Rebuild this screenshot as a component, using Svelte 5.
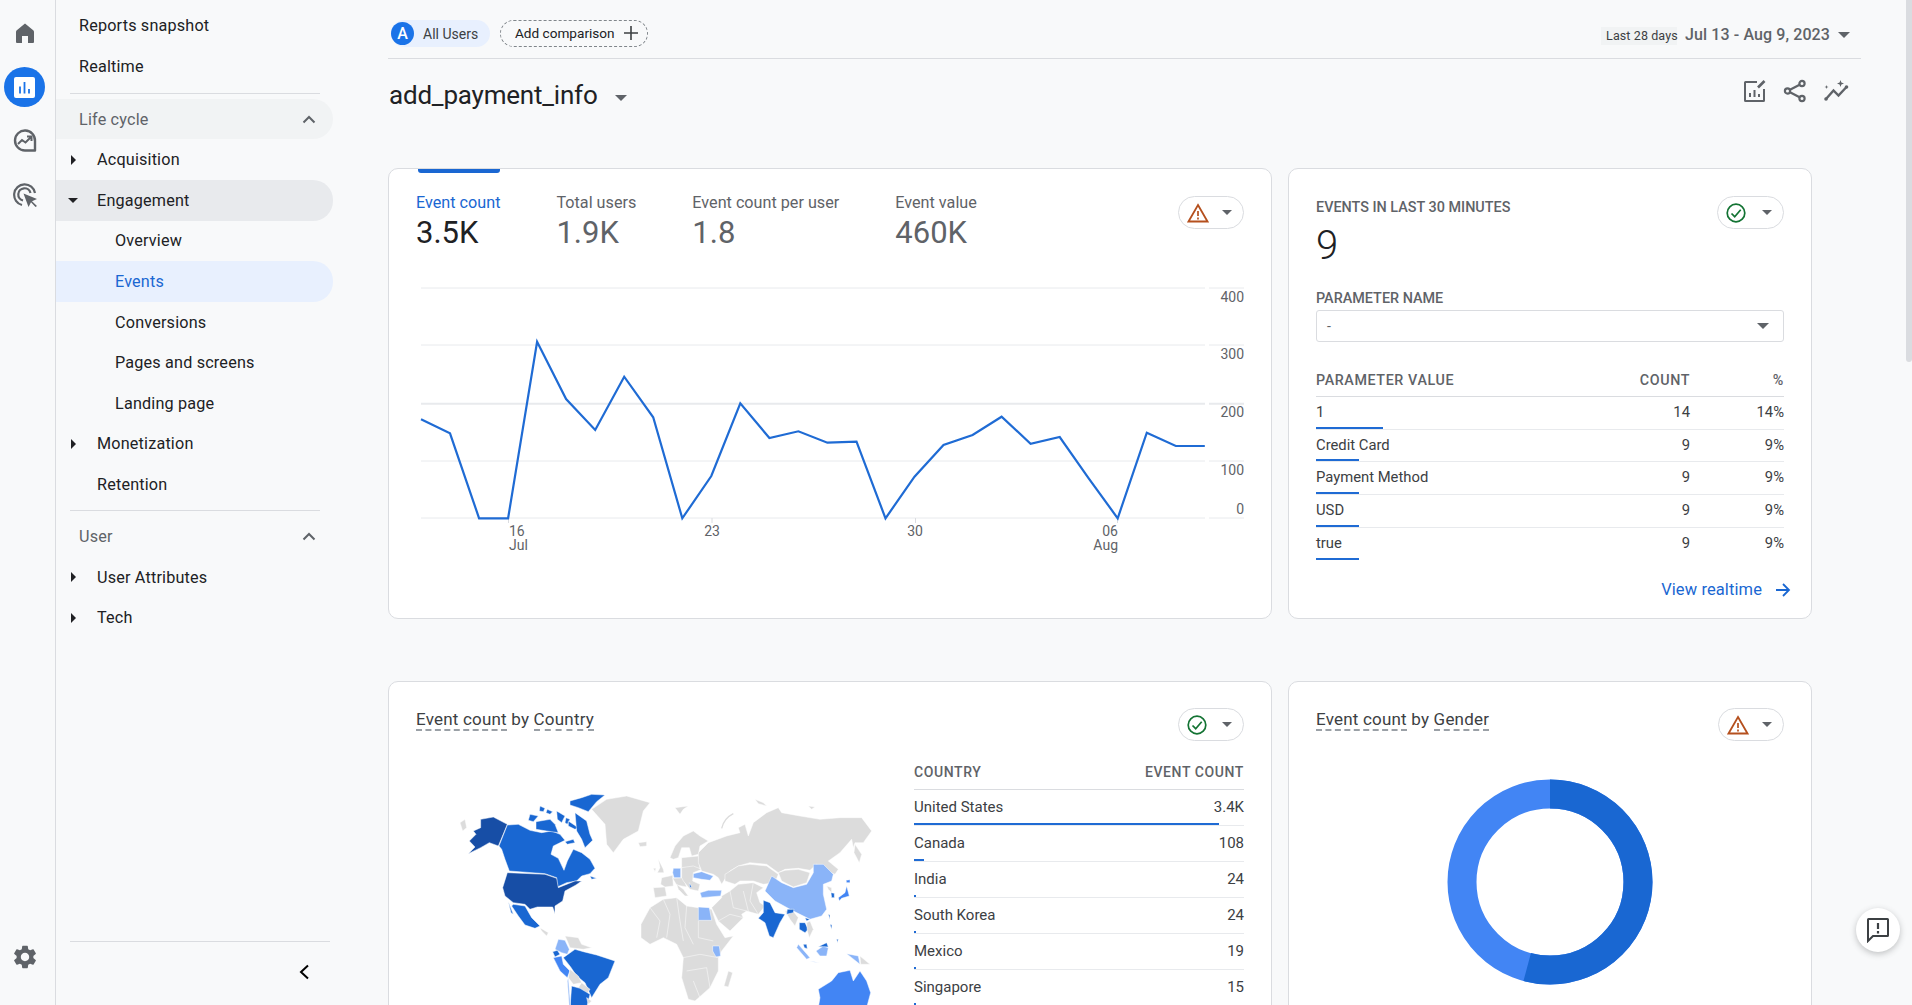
<script>
  const rows = [
    { t: 'Reports snapshot', k: 'top' },
    { t: 'Realtime', k: 'top' }
  ];
  const life = [
    { t: 'Acquisition', a: 'r' },
    { t: 'Engagement', a: 'd', cls: 'eng' },
    { t: 'Overview', sub: true },
    { t: 'Events', sub: true, cls: 'act' },
    { t: 'Conversions', sub: true },
    { t: 'Pages and screens', sub: true },
    { t: 'Landing page', sub: true },
    { t: 'Monetization', a: 'r' },
    { t: 'Retention' }
  ];
  const user = [
    { t: 'User Attributes', a: 'r' },
    { t: 'Tech', a: 'r' }
  ];
  const tabs = [
    { l: 'Event count', v: '3.5K', on: true },
    { l: 'Total users', v: '1.9K' },
    { l: 'Event count per user', v: '1.8' },
    { l: 'Event value', v: '460K' }
  ];
  const zy = [778,820,1075,1075,545,717,810,650,772,1075,948,730,834,814,848,845,1075,950,855,825,770,851,831,955,1075,818,858,858];
  const line = zy.map((y, i) => `${(421 + i * 29.03).toFixed(1)},${(160 + y / 3).toFixed(1)}`).join(' ');
  const grid = [288, 345, 403.7, 461, 518];
  const yl = [['400', 302], ['300', 359], ['200', 417], ['100', 475], ['0', 514]];
  const params = [
    { n: '1', c: '14', p: '14%', w: 14.3 },
    { n: 'Credit Card', c: '9', p: '9%', w: 9.2 },
    { n: 'Payment Method', c: '9', p: '9%', w: 9.2 },
    { n: 'USD', c: '9', p: '9%', w: 9.2 },
    { n: 'true', c: '9', p: '9%', w: 9.2 }
  ];
  const countries = [
    { n: 'United States', c: '3.4K', w: 92.3 },
    { n: 'Canada', c: '108', w: 3 },
    { n: 'India', c: '24', w: 0.7 },
    { n: 'South Korea', c: '24', w: 0.7 },
    { n: 'Mexico', c: '19', w: 0.6 },
    { n: 'Singapore', c: '15', w: 0.5 }
  ];
  const D = '#174ea6', B = '#1967d2', M = '#4285f4', L = '#8ab4f8', G = '#dcdcdc';
  const west = [
    [G, '30,125 45,115 50,140 38,150'],
    [D, '92,115 130,108 172,130 145,195 118,185 92,200 55,218 75,198 58,180 78,160 70,150 92,140'],
    [B, '172,132 205,130 240,148 275,155 305,150 330,160 345,178 310,195 303,220 325,232 342,268 352,240 370,205 395,215 420,235 435,262 420,278 395,285 380,300 350,305 322,318 320,290 285,278 178,270 165,235 155,205 147,195'],
    [B, '240,100 265,105 250,122 235,118'],
    [B, '258,122 300,115 315,130 325,155 290,150 258,145'],
    [B, '270,75 285,82 280,92 268,90'],
    [B, '292,85 308,92 300,100 288,95'],
    [B, '320,90 345,105 335,125 322,115'],
    [B, '348,110 360,115 352,130 345,125'],
    [B, '355,120 385,140 375,145 355,135'],
    [B, '360,60 395,50 425,40 465,42 440,62 415,92 385,80 360,72'],
    [B, '375,95 410,120 420,160 428,178 405,200 395,175 380,150'],
    [B, '345,182 370,175 375,185 352,190'],
    [B, '420,285 440,292 425,295'],
    [D, '172,275 285,280 320,292 325,320 375,300 395,300 378,312 345,330 338,360 315,375 315,398 308,378 285,378 262,378 240,385 225,370 190,365 165,345 158,320'],
    [B, '190,370 225,375 245,410 270,435 255,442 225,432 205,405 185,375'],
    [B, '175,362 190,400 183,395'],
    [G, '270,440 295,455 290,465 275,450'],
    [G, '345,465 385,470 395,490 425,500 400,505 360,500 352,480'],
    [L, '325,475 345,478 358,505 352,520 335,515 315,505'],
    [B, '308,512 322,508 330,520 315,528'],
    [M, '310,530 335,525 340,550 360,570 352,590 330,570'],
    [B, '340,530 375,505 400,512 440,522 495,540 475,590 450,610 425,650 405,605 380,585 362,558'],
    [G, '360,565 385,585 395,605 370,610 355,590'],
    [G, '395,605 420,625 410,640 385,620'],
    [B, '365,615 390,622 420,640 410,680 360,680'],
    [L, '355,590 362,680 358,680 352,600'],
    [G, '410,650 425,660 415,670'],
    [G, '425,85 470,55 530,45 600,65 580,90 565,150 520,175 490,215 470,190 465,130'],
    [G, '565,185 590,182 590,195 570,197']
  ];
  const east = [
    [G, '-27,430 0,380 40,355 80,350 110,375 145,380 185,385 200,430 225,470 250,465 215,510 205,530 205,570 180,620 135,660 115,655 95,590 100,530 80,490 40,470 0,490 -27,470'],
    [L, '145,378 178,380 185,418 145,418'],
    [L, '188,495 208,495 212,525 198,528 188,510'],
    [G, '235,570 248,575 235,618 222,615'],
    [G, '60,230 75,195 100,165 130,150 150,165 175,180 150,195 145,220 125,225 118,200 95,200 85,230 70,235'],
    [G, '25,235 40,265 42,275 22,275 30,260'],
    [G, '10,262 18,262 15,272'],
    [G, '10,320 45,318 50,345 15,350'],
    [G, '35,290 68,283 70,315 45,318 32,310'],
    [G, '95,230 145,225 150,262 95,262'],
    [G, '68,292 100,290 110,318 80,312'],
    [L, '70,262 92,262 92,290 72,290 68,275'],
    [G, '80,310 100,325 115,345 105,345 85,325'],
    [G, '95,260 130,255 155,265 130,275 128,300 150,310 145,330 120,325 100,300 95,290'],
    [L, '130,278 155,272 190,285 180,298 155,295 130,290'],
    [L, '150,335 175,328 215,328 212,345 155,350'],
    [B, '118,305 125,318 120,320'],
    [G, '145,215 175,185 230,165 270,155 265,140 285,130 295,165 310,125 350,95 385,80 395,95 450,105 510,115 570,110 635,110 665,150 640,185 615,185 610,200 605,175 570,215 535,240 565,265 555,280 530,270 500,250 480,268 445,262 405,265 385,275 350,250 300,245 265,255 240,270 215,310 205,290 190,280 155,270 145,245'],
    [G, '615,190 635,220 628,245 612,215'],
    [G, '75,80 115,75 100,85 90,100'],
    [G, '315,55 340,65 350,75 325,68'],
    [G, '475,75 495,78 485,85'],
    [G, '225,280 265,255 300,250 350,255 385,280 375,305 340,310 310,300 270,300 255,310 225,300'],
    [G, '385,275 405,268 445,265 480,275 470,305 430,318 395,300'],
    [G, '215,345 240,330 265,310 310,305 340,320 320,335 330,365 345,375 325,400 290,390 275,400 280,410 240,450 205,420 185,380 215,350'],
    [L, '345,330 365,285 395,305 430,320 470,310 490,275 490,250 520,250 550,280 545,300 520,310 520,340 530,385 515,405 480,415 450,400 420,385 375,360'],
    [G, '530,315 545,320 545,335 535,325'],
    [B, '543,335 553,337 553,350 545,350'],
    [M, '588,298 600,296 600,305 590,305'],
    [M, '590,315 598,345 575,352 568,360 565,350 585,335'],
    [B, '340,358 360,365 375,395 405,400 390,425 370,470 358,465 345,425 325,412 340,395'],
    [G, '405,390 425,385 445,410 435,435 420,415'],
    [B, '412,385 432,385 430,395 410,400'],
    [B, '448,425 465,425 475,445 465,455 448,445'],
    [G, '470,425 480,420 490,445 478,470 472,450'],
    [B, '465,410 480,415 470,420'],
    [B, '535,400 540,402 540,415'],
    [B, '540,430 546,432 545,445'],
    [L, '445,490 480,530 470,535 440,500'],
    [L, '480,540 510,545 490,543'],
    [B, '460,490 470,490 472,503 463,500'],
    [L, '498,510 520,495 535,500 530,525 510,525'],
    [B, '505,497 530,485 535,498 520,497'],
    [B, '560,475 565,475 562,485'],
    [L, '590,518 625,525 630,550 605,530'],
    [G, '630,525 660,550 632,550'],
    [M, '505,625 545,600 565,575 600,568 610,600 630,570 650,600 662,635 650,680 505,680 510,650']
  ];
  const borders = [
    '0,380 30,420 20,470', '40,355 60,400 50,470', '80,350 90,420 100,480', '110,375 105,440 130,490',
    '145,420 145,470 190,480', '100,530 150,520 205,530', '110,570 170,560 180,620', '130,600 150,650',
    '240,330 250,380 290,390', '280,330 295,390', '310,305 300,360 325,400', '205,420 240,400 280,410'
  ];
  const C = 2 * Math.PI * 88;
</script>

<div class="app">
  <nav class="rail">
    <div class="slot">
      <svg width="18" height="20" viewBox="0 0 18 20"><path d="M9 0.5 L17.5 7.5 Q18 8 18 9 V19 Q18 20 17 20 H12 V13 H6 V20 H1 Q0 20 0 19 V9 Q0 8 .5 7.5 Z" fill="#5f6368"/></svg>
    </div>
    <div class="slot on">
      <svg width="21" height="21" viewBox="0 0 21 21"><rect width="21" height="21" rx="2" fill="#fff"/><path d="M6 9.5V16.5M10.5 5V16.5M15 12V16.5" stroke="#1a73e8" stroke-width="1.8"/></svg>
    </div>
    <div class="slot">
      <svg width="24" height="24" viewBox="0 0 24 24" fill="none" stroke="#5f6368" stroke-width="2.400"><path d="M22 21.5H12A10 10 0 1 1 22 12Z" stroke-linejoin="round"/><path d="M5 15l4-4 3.5 2.5L18 8M14 7.5h4.5V12" stroke-width="2"/></svg>
    </div>
    <div class="slot">
      <svg width="24" height="24" viewBox="0 0 24 24" fill="none" stroke="#5f6368" stroke-width="2.200"><path d="M9 22A10.5 10.5 0 1 1 22 10"/><path d="M10 17.5A6.2 6.2 0 1 1 17.5 10"/><path d="M10.5 10.5L24 16l-5 2.2L24 23l-1.5 1-4.500-4.800L15.500 24Z" fill="#5f6368" stroke="none"/></svg>
    </div>
    <div class="gear">
      <svg width="28" height="28" viewBox="0 0 24 24"><path fill="#5f6368" d="M19.14 12.94c.04-.3.06-.61.06-.94 0-.32-.02-.64-.07-.94l2.03-1.58c.18-.14.23-.41.12-.61l-1.92-3.32c-.12-.22-.37-.29-.59-.22l-2.39.96c-.5-.38-1.03-.7-1.62-.94l-.36-2.54c-.04-.24-.24-.41-.48-.41h-3.84c-.24 0-.43.17-.47.41l-.36 2.54c-.59.24-1.13.57-1.62.94l-2.39-.96c-.22-.08-.47 0-.59.22L2.74 8.87c-.12.21-.08.47.12.61l2.03 1.58c-.05.3-.09.63-.09.94s.02.64.07.94l-2.03 1.58c-.18.14-.23.41-.12.61l1.92 3.32c.12.22.37.29.59.22l2.39-.96c.5.38 1.03.7 1.62.94l.36 2.54c.05.24.24.41.48.41h3.84c.24 0 .44-.17.47-.41l.36-2.54c.59-.24 1.13-.56 1.62-.94l2.39.96c.22.08.47 0 .59-.22l1.92-3.32c.12-.22.07-.47-.12-.61l-2.01-1.58zM12 15.6c-1.98 0-3.6-1.62-3.6-3.6s1.62-3.6 3.6-3.6 3.6 1.62 3.6 3.6-1.62 3.6-3.6 3.6z"/></svg>
    </div>
  </nav>

  <aside class="side">
    <div class="rows">
      {#each rows as r}
        <div class="row top"><span>{r.t}</span></div>
      {/each}
      <div class="sep first"></div>
      <div class="row head lifec"><span>Life cycle</span><svg class="chev" width="14" height="9" viewBox="0 0 14 9" fill="none" stroke="#5f6368" stroke-width="2"><path d="M1.500 7.500 7 2l5.500 5.500"/></svg></div>
      {#each life as r}
        <div class="row {r.cls || ''}" class:sub={r.sub} class:lvl={!r.sub}>
          {#if r.a === 'r'}<i class="ar r"></i>{:else if r.a === 'd'}<i class="ar d"></i>{/if}
          <span>{r.t}</span>
        </div>
      {/each}
      <div class="sep second"></div>
      <div class="row head"><span>User</span><svg class="chev" width="14" height="9" viewBox="0 0 14 9" fill="none" stroke="#5f6368" stroke-width="2"><path d="M1.500 7.500 7 2l5.500 5.500"/></svg></div>
      {#each user as r}
        <div class="row lvl"><i class="ar r"></i><span>{r.t}</span></div>
      {/each}
    </div>
    <div class="foot">
      <svg width="12" height="16" viewBox="0 0 12 16" fill="none" stroke="#000" stroke-width="2"><path d="M10 1.500 3 8l7 6.500"/></svg>
    </div>
  </aside>

  <main class="main">
    <header class="hdr">
      <div class="chip users"><b class="av">A</b><span>All Users</span></div>
      <div class="chip add"><span>Add comparison</span><svg width="14" height="14" viewBox="0 0 14 14" stroke="#3c4043" stroke-width="1.600"><path d="M7 0v14M0 7h14"/></svg></div>
      <div class="date">
        <span class="days">Last 28 days</span>
        <span class="range">Jul 13 - Aug 9, 2023</span>
        <i class="tri big"></i>
      </div>
    </header>

    <section class="titlebar">
      <div class="title"><h1>add_payment_info</h1><i class="tri big"></i></div>
      <div class="tools">
        <svg width="24" height="24" viewBox="0 0 24 24" fill="none" stroke="#5f6368" stroke-width="2"><path d="M14 3H2.500Q2 3 2 3.500V21.500Q2 22 2.500 22H20.500Q21 22 21 21.500V10"/><path d="M7 18v-4M11.500 18v-7M16 18v-3"/><path d="M15 8.500 21.500 2" stroke-width="2.600"/></svg>
        <svg width="24" height="24" viewBox="0 0 24 24" fill="none" stroke="#5f6368" stroke-width="2.200"><circle cx="19" cy="4.500" r="2.600"/><circle cx="4.500" cy="12" r="2.600"/><circle cx="19" cy="19.500" r="2.600"/><path d="M7 10.800 16.600 5.700M7 13.200l9.600 5.100"/></svg>
        <svg width="26" height="24" viewBox="0 0 26 24" fill="none" stroke="#5f6368" stroke-width="2.400"><path d="M3 20 10.500 11.500l5 5L23.500 8"/><circle cx="3" cy="20" r="1.800" fill="#5f6368" stroke="none"/><circle cx="23.500" cy="8" r="1.800" fill="#5f6368" stroke="none"/><path d="M17.500 1l.9 2.600 2.600.9-2.600.9-.9 2.600-.9-2.600L14 4.500l2.600-.9zM3.500 6l.5 1.500 1.500.5-1.500.5-.5 1.500-.5-1.500L1.500 8 3 7.500z" fill="#5f6368" stroke="none"/></svg>
      </div>
    </section>

    <div class="grid r1">
      <article class="card c1">
        <div class="ind"></div>
        <div class="tophead">
          <div class="tabs">
            {#each tabs as t}
              <div class="tab" class:on={t.on}><div class="tl">{t.l}</div><div class="tv">{t.v}</div></div>
            {/each}
          </div>
          <div class="badge">
            <svg width="22" height="20" viewBox="0 0 22 20" fill="none" stroke="#b5501e" stroke-width="1.800"><path d="M11 2 20.500 18.500H1.500Z"/><path d="M11 8v5M11 14.500v2" stroke-width="1.700"/></svg>
            <i class="tri"></i>
          </div>
        </div>
        <svg class="chart" width="882" height="290" viewBox="389 270 882 290">
          {#each grid as y, i}
            <line x1="421" x2="1205" y1={y} y2={y} stroke="#e8eaed" stroke-width={i === 2 ? 2 : 1}/>
            <line x1="1209" x2="1244" y1={y} y2={y} stroke="#e8eaed" stroke-width={i === 2 ? 2 : 1}/>
          {/each}
          {#each [508.500, 712, 915.500, 1117.500] as x}
            <line x1={x} x2={x} y1="518" y2="523" stroke="#dadce0"/>
          {/each}
          <polyline points={line} fill="none" stroke="#1f6bd4" stroke-width="2.200" stroke-linejoin="miter"/>
          {#each yl as [t, y]}
            <text x="1244" {y} text-anchor="end" class="ax">{t}</text>
          {/each}
          <text x="509" y="536" class="ax">16</text>
          <text x="509" y="550" class="ax">Jul</text>
          <text x="712" y="536" text-anchor="middle" class="ax">23</text>
          <text x="915" y="536" text-anchor="middle" class="ax">30</text>
          <text x="1118" y="536" text-anchor="end" class="ax">06</text>
          <text x="1118" y="550" text-anchor="end" class="ax">Aug</text>
        </svg>
      </article>

      <article class="card c2">
        <div class="rhead">
          <div>
            <div class="caps first">EVENTS IN LAST 30 MINUTES</div>
            <div class="nine">9</div>
          </div>
          <div class="badge">
            <svg width="20" height="20" viewBox="0 0 20 20" fill="none" stroke="#137333" stroke-width="1.700"><circle cx="10" cy="10" r="8.800"/><path d="M5.500 10.500l3.200 3.200 6-7"/></svg>
            <i class="tri"></i>
          </div>
        </div>
        <div class="caps pn">PARAMETER NAME</div>
        <div class="select"><span>-</span><i class="tri big"></i></div>
        <div class="ptable">
          <div class="phead"><span>PARAMETER VALUE</span><span class="num">COUNT</span><span class="num">%</span></div>
          {#each params as p, i}
            <div class="prow" class:end={i === params.length - 1}>
              <div class="pcells"><span>{p.n}</span><span class="num">{p.c}</span><span class="num">{p.p}</span></div>
              <div class="bar" style="width:{p.w}%"></div>
            </div>
          {/each}
        </div>
        <div class="link"><span>View realtime</span><svg width="16" height="14" viewBox="0 0 16 14" fill="none" stroke="#1a67d2" stroke-width="1.800"><path d="M1 7h13M8 1l6 6-6 6"/></svg></div>
      </article>
    </div>

    <div class="grid r2">
      <article class="card c3">
        <div class="chead">
          <h2><span class="dash">Event count</span> by <span class="dash">Country</span></h2>
          <div class="badge">
            <svg width="20" height="20" viewBox="0 0 20 20" fill="none" stroke="#137333" stroke-width="1.700"><circle cx="10" cy="10" r="8.800"/><path d="M5.500 10.500l3.200 3.200 6-7"/></svg>
            <i class="tri"></i>
          </div>
        </div>
        <div class="cbody">
          <svg class="map" width="498" height="264" viewBox="416 741 498 264">
            <g transform="translate(450 780) scale(.3333)">
              {#each west as [f, p]}
                <polygon points={p} fill={f} stroke="#fff" stroke-width="1.500"/>
              {/each}
            </g>
            <g transform="translate(650 780) scale(.3333)">
              <path d="M215 142Q222 112 250 98" fill="none" stroke={G} stroke-width="4"/>
              {#each east as [f, p]}
                <polygon points={p} fill={f} stroke="#fff" stroke-width="1.500"/>
              {/each}
              {#each borders as b}
                <polyline points={b} fill="none" stroke="#fff" stroke-width="1.500"/>
              {/each}
            </g>
          </svg>
          <div class="ctable">
            <div class="cth"><span>COUNTRY</span><span>EVENT COUNT</span></div>
            {#each countries as c}
              <div class="crow">
                <div class="ccells"><span>{c.n}</span><span>{c.c}</span></div>
                <div class="bar" style="width:{c.w}%"></div>
              </div>
            {/each}
          </div>
        </div>
      </article>

      <article class="card c4">
        <div class="chead">
          <h2><span class="dash">Event count</span> by <span class="dash">Gender</span></h2>
          <div class="badge">
            <svg width="22" height="20" viewBox="0 0 22 20" fill="none" stroke="#b5501e" stroke-width="1.800"><path d="M11 2 20.500 18.500H1.500Z"/><path d="M11 8v5M11 14.500v2" stroke-width="1.700"/></svg>
            <i class="tri"></i>
          </div>
        </div>
        <svg class="donut" width="206" height="206" viewBox="0 0 206 206">
          <circle cx="103" cy="103" r="88" fill="none" stroke="#4285f4" stroke-width="29"/>
          <circle cx="103" cy="103" r="88" fill="none" stroke="#1967d2" stroke-width="29" stroke-dasharray="{C * 0.541} {C}" transform="rotate(-90 103 103)"/>
        </svg>
      </article>
    </div>
  </main>

  <div class="scrollbar"></div>
  <button class="fb" aria-label="Feedback">
    <svg width="24" height="26" viewBox="0 0 24 26" fill="none" stroke="#3c4043" stroke-width="2"><path d="M2 24V2.500Q2 2 2.500 2H21.500Q22 2 22 2.500V18.500Q22 19 21.500 19H7Z"/><path d="M12 6v6M12 14v2.500" stroke-width="2.200"/></svg>
  </button>
</div>

<style>
  :global(body) { margin: 0; background: #f8f9fa; }
  .app { position: relative; display: flex; width: 1912px; height: 1005px; overflow: hidden; background: #f8f9fa; font-family: Roboto, "Liberation Sans", sans-serif; color: #202124; }
  .rail { width: 56px; flex: none; border-right: 1px solid #dadce0; display: flex; flex-direction: column; align-items: center; padding: 13px 6px 0 0; box-sizing: border-box; }
  .slot { width: 41px; height: 40px; margin-bottom: 14px; display: flex; align-items: center; justify-content: center; border-radius: 50%; flex: none; }
  .slot.on { background: #1a73e8; }
  .gear { margin-top: auto; margin-bottom: 34px; height: 28px; }
  .side { width: 332px; flex: none; display: flex; flex-direction: column; }
  .rows { width: 277px; padding-top: 5.400px; }
  .row { height: 40.6px; display: flex; align-items: center; padding-left: 23px; font-size: 16.200px; letter-spacing: .18px; color: #202124; box-sizing: border-box; position: relative; border-radius: 0 20px 20px 0; white-space: nowrap; }
  .row.lvl { padding-left: 41px; }
  .row.sub { padding-left: 59px; }
  .row.head { color: #5f6368; justify-content: space-between; padding-right: 17px; }
  .row.lifec { background: #f1f3f4; }
  .row.eng { background: #e8eaed; }
  .row.act { background: #e8f0fe; color: #1a67d2; }
  .sep { height: 1px; background: #dadce0; margin-left: 14px; width: 250px; }
  .sep.first { margin-top: 6.500px; margin-bottom: 4.800px; }
  .sep.second { margin-top: 5px; margin-bottom: 5.700px; }
  .ar { position: absolute; left: 14px; top: 50%; width: 0; height: 0; }
  .ar.r { margin-top: -5px; border-left: 5px solid #202124; border-top: 5px solid transparent; border-bottom: 5px solid transparent; left: 15px; }
  .ar.d { margin-top: -2px; border-top: 5px solid #202124; border-left: 5px solid transparent; border-right: 5px solid transparent; left: 12px; }
  .foot { margin-top: auto; margin-left: 14px; width: 260px; border-top: 1px solid #dadce0; height: 64px; box-sizing: border-box; display: flex; justify-content: flex-end; align-items: flex-start; padding: 22px 20px 0 0; }
  .main { flex: 1; min-width: 0; }
  .hdr { height: 59px; margin-right: 51px; border-bottom: 1px solid #dadce0; box-sizing: border-box; display: flex; align-items: flex-start; padding: 20px 11px 0 3px; }
  .chip { height: 27px; border-radius: 14px; display: flex; align-items: center; box-sizing: border-box; font-size: 14px; }
  .users { width: 99px; background: #e8f0fe; gap: 9px; color: #3c4043; }
  .av { width: 23px; height: 23px; background: #1a73e8; color: #fff; border-radius: 50%; display: flex; align-items: center; justify-content: center; font-weight: 500; font-size: 16px; flex: none; }
  .add { margin-left: 10px; width: 148px; border: 1px dashed #80868b; padding: 0 0 1px 14px; gap: 9px; color: #202124; font-size: 13.600px; }
  .date { margin-left: auto; display: flex; align-items: center; height: 29px; }
  .days { background: #f1f3f4; font-size: 12.500px; color: #3c4043; padding: 0 5px; height: 18px; line-height: 18px; width: 76px; box-sizing: border-box; margin-top: 3px; letter-spacing: .1px; white-space: nowrap; }
  .range { margin-left: 8px; font-size: 16px; font-weight: 500; color: #5f6368; white-space: nowrap; letter-spacing: .1px; }
  .tri { display: inline-block; width: 0; height: 0; border-top: 5px solid #5f6368; border-left: 5px solid transparent; border-right: 5px solid transparent; }
  .tri.big { border-top-width: 6.500px; border-left-width: 6.500px; border-right-width: 6.500px; }
  .date .tri { margin-left: 8px; }
  .titlebar { height: 109px; margin-right: 51px; display: flex; justify-content: space-between; align-items: flex-start; padding-top: 20px; box-sizing: border-box; }
  .title { display: flex; align-items: center; height: 32px; padding-left: 1px; }
  h1 { margin: 0; font-weight: 400; font-size: 26px; letter-spacing: -.2px; color: #202124; line-height: 32px; }
  .title .tri { margin-left: 17px; margin-top: 6px; }
  .tools { display: flex; gap: 16px; align-items: center; padding-right: 12px; }
  .grid { display: grid; grid-template-columns: 884px 524px; gap: 16px; }
  .r1 { height: 451px; margin-bottom: 62px; }
  .r2 { height: 420px; }
  .card { background: #fff; border: 1px solid #dadce0; border-radius: 10px; box-sizing: border-box; padding: 0 27px; min-width: 0; }
  .ind { width: 82px; height: 4px; margin-left: 2px; background: #1a67d2; border-radius: 0 0 3px 3px; }
  .tophead { display: flex; justify-content: space-between; align-items: flex-start; margin-top: 20px; }
  .tabs { display: flex; gap: 56px; }
  .tl { font-size: 16.200px; line-height: 20px; color: #5f6368; }
  .tv { font-size: 31px; line-height: 36px; margin-top: 2px; color: #5f6368; }
  .tab.on .tl { color: #1a67d2; }
  .tab.on .tv { color: #202124; }
  .badge { width: 66px; height: 33px; border: 1px solid #dadce0; border-radius: 17px; display: flex; align-items: center; justify-content: space-between; box-sizing: border-box; padding: 0 11px 0 8px; margin-top: 3px; flex: none; }
  .chart { display: block; margin: 19px 0 0 -27px; }
  .ax { font-size: 14px; fill: #5f6368; font-family: Roboto, "Liberation Sans", sans-serif; }
  .rhead { display: flex; justify-content: space-between; padding-top: 27px; }
  .caps { font-size: 14.400px; font-weight: 500; color: #5f6368; line-height: 22px; white-space: nowrap; }
  .caps.first { margin-top: 1px; }
  .nine { font-size: 40px; line-height: 46px; margin-top: 4px; color: #202124; font-weight: 300; }
  .rhead .badge { margin-top: 0; width: 67px; }
  .pn { margin-top: 19px; }
  .select { height: 32px; border: 1px solid #dadce0; border-radius: 3px; box-sizing: border-box; display: flex; align-items: center; justify-content: space-between; padding: 0 14px 0 10px; color: #5f6368; font-size: 14px; }
  .ptable { margin-top: 27px; }
  .phead { display: grid; grid-template-columns: 1fr 100px 94px; font-size: 14.300px; font-weight: 500; letter-spacing: .6px; color: #5f6368; line-height: 22px; padding-bottom: 5px; border-bottom: 1px solid #dadce0; }
  .num { text-align: right; }
  .prow { height: 32.700px; border-bottom: 1px solid #e8eaed; box-sizing: border-box; display: flex; flex-direction: column; justify-content: flex-end; }
  .prow.end { border-bottom: 0; height: 32px; }
  .pcells { display: grid; grid-template-columns: 1fr 100px 94px; font-size: 14.800px; color: #3c4043; line-height: 31px; height: 29.600px; }
  .bar { height: 2px; background: #1f6bd4; flex: none; }
  .link { display: flex; justify-content: flex-end; align-items: center; gap: 13px; margin: 18px -7px 0 0; font-size: 16.500px; color: #1a67d2; letter-spacing: .1px; line-height: 24px; }
  .chead { display: flex; justify-content: space-between; align-items: flex-start; padding-top: 26px; }
  .chead .badge { margin-top: 0; }
  h2 { margin: 0; font-weight: 400; font-size: 17px; color: #3c4043; line-height: 22px; letter-spacing: .2px; }
  .dash { display: inline-block; border-bottom: 2px dashed #9aa0a6; line-height: 20px; }
  .cbody { display: flex; margin-top: 1px; }
  .map { display: block; flex: none; width: 498px; }
  .ctable { width: 330px; flex: none; padding-top: 19px; }
  .cth { display: flex; justify-content: space-between; font-size: 14px; font-weight: 500; letter-spacing: .6px; color: #5f6368; line-height: 22px; padding-bottom: 6px; border-bottom: 1px solid #dadce0; }
  .crow { height: 36px; border-bottom: 1px solid #e8eaed; box-sizing: border-box; display: flex; flex-direction: column; justify-content: flex-end; }
  .ccells { display: flex; justify-content: space-between; font-size: 15px; color: #3c4043; line-height: 35px; height: 33px; }
  .donut { display: block; margin: 38px auto 0; }
  .scrollbar { position: absolute; right: 0; top: 0; width: 6px; height: 362px; background: #dadce0; border-radius: 0 0 3px 3px; }
  .fb { position: absolute; left: 1856px; top: 908px; width: 44px; height: 44px; border: 0; border-radius: 50%; background: #fff; box-shadow: 0 2px 6px rgba(60,64,67,.3); display: flex; align-items: center; justify-content: center; padding: 0; }
</style>
